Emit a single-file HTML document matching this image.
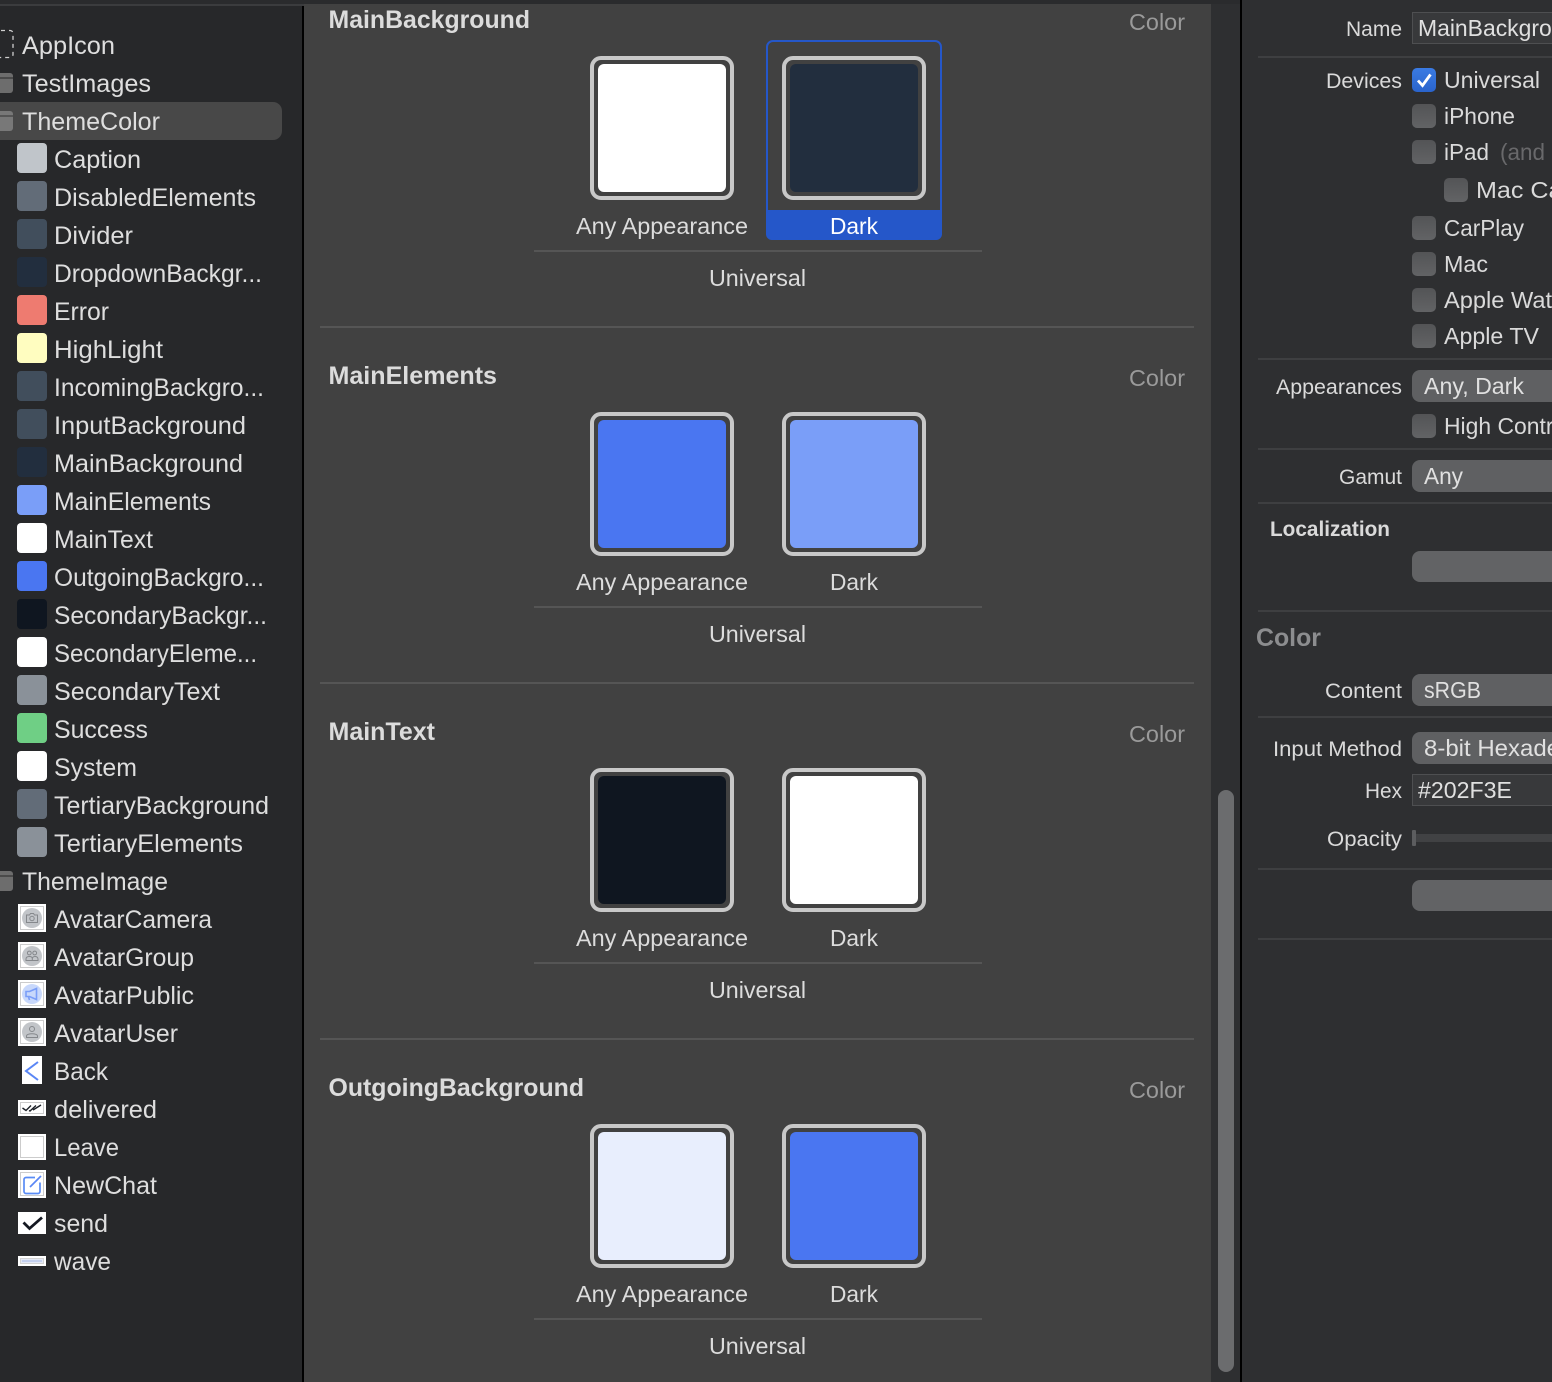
<!DOCTYPE html>
<html><head><meta charset="utf-8"><title>Assets</title>
<style>
html,body{margin:0;padding:0;background:#2e2f31;width:1552px;height:1382px;overflow:hidden}
svg{display:block;font-family:"Liberation Sans",sans-serif}
.s{font-size:25px;fill:#dedede}
.l{font-size:21px;fill:#dadada}
.c{font-size:23px;fill:#dadada}
.h{font-size:25px;font-weight:bold;fill:#dcdcdc}
.g{font-size:23px;fill:#9a9a9a}
.d{font-size:23px;fill:#dcdcdc}
.p{font-size:23px;fill:#e0e0e0}
.sw{fill:none;stroke:#c8c8c8;stroke-width:4}
.sep{fill:#555}
.rs{fill:#3e3f41}
</style></head><body>
<svg width="1552" height="1382" viewBox="0 0 1552 1382" xmlns="http://www.w3.org/2000/svg">
<defs>
<linearGradient id="cb" x1="0" y1="0" x2="0" y2="1"><stop offset="0" stop-color="#535456"/><stop offset="1" stop-color="#626365"/></linearGradient>
<linearGradient id="bl" x1="0" y1="0" x2="0" y2="1"><stop offset="0" stop-color="#3a7be4"/><stop offset="1" stop-color="#2a64cc"/></linearGradient>
</defs>
<!-- backgrounds -->
<rect width="1552" height="1382" fill="#2e2f31"/>
<rect x="0" y="0" width="304" height="1382" fill="#27282a"/>
<rect x="0" y="0" width="1240" height="4" fill="#2a2b2d"/>
<rect x="0" y="4" width="304" height="2" fill="#3b3c3e"/>
<rect x="302" y="6" width="2" height="1376" fill="#000"/>
<rect x="304" y="4" width="907" height="1378" fill="#414141"/>
<rect x="1211" y="4" width="29" height="1378" fill="#2e2f31"/>
<rect x="1218" y="790" width="16" height="582" rx="8" fill="#6b6c6e"/>
<rect x="1240" y="0" width="2" height="1382" fill="#000"/>

<!-- sidebar selection -->
<rect x="-10" y="102" width="292" height="38" rx="9" fill="#484848"/>

<!-- sidebar top-level icons -->
<rect x="-10" y="30.500" width="23" height="27" rx="3" fill="none" stroke="#cfcfcf" stroke-width="1.300" stroke-dasharray="4 4"/>
<rect x="-8" y="73" width="21" height="20" rx="3" fill="#6d6d6d"/><rect x="-8" y="77" width="21" height="2" fill="#4a4a4a"/>
<rect x="-8" y="111" width="21" height="20" rx="3" fill="#787878"/><rect x="-8" y="115" width="21" height="2" fill="#555"/>
<rect x="-8" y="871" width="21" height="20" rx="3" fill="#6d6d6d"/><rect x="-8" y="875" width="21" height="2" fill="#4a4a4a"/>

<!-- colour swatches -->
<rect x="17" y="143" width="30" height="30" rx="4" fill="#c0c5ca"/>
<rect x="17" y="181" width="30" height="30" rx="4" fill="#626c78"/>
<rect x="17" y="219" width="30" height="30" rx="4" fill="#414e5c"/>
<rect x="17" y="257" width="30" height="30" rx="4" fill="#222e3e"/>
<rect x="17" y="295" width="30" height="30" rx="4" fill="#ee7b70"/>
<rect x="17" y="333" width="30" height="30" rx="4" fill="#fffdc0"/>
<rect x="17" y="371" width="30" height="30" rx="4" fill="#414e5c"/>
<rect x="17" y="409" width="30" height="30" rx="4" fill="#414e5c"/>
<rect x="17" y="447" width="30" height="30" rx="4" fill="#222e3e"/>
<rect x="17" y="485" width="30" height="30" rx="4" fill="#7a9ef8"/>
<rect x="17" y="523" width="30" height="30" rx="4" fill="#ffffff"/>
<rect x="17" y="561" width="30" height="30" rx="4" fill="#4a76f1"/>
<rect x="17" y="599" width="30" height="30" rx="4" fill="#0f1620"/>
<rect x="17" y="637" width="30" height="30" rx="4" fill="#ffffff"/>
<rect x="17" y="675" width="30" height="30" rx="4" fill="#8a9199"/>
<rect x="17" y="713" width="30" height="30" rx="4" fill="#6fcf85"/>
<rect x="17" y="751" width="30" height="30" rx="4" fill="#ffffff"/>
<rect x="17" y="789" width="30" height="30" rx="4" fill="#626c78"/>
<rect x="17" y="827" width="30" height="30" rx="4" fill="#8a9199"/>

<!-- image thumbnails -->
<g>
<rect x="18" y="904" width="28" height="28" fill="#fff"/><rect x="20.500" y="906.500" width="23" height="23" fill="none" stroke="#ccc"/>
<circle cx="32" cy="918" r="10" fill="#c2c5c9"/><path d="M26.500 915h3l1-1.500h3l1 1.500h3v7.500h-11z" fill="none" stroke="#85888c"/><circle cx="32" cy="918.500" r="2.200" fill="none" stroke="#85888c"/>
<rect x="18" y="942" width="28" height="28" fill="#fff"/><rect x="20.500" y="944.500" width="23" height="23" fill="none" stroke="#ccc"/>
<circle cx="32" cy="956" r="10" fill="#c2c5c9"/><circle cx="29.300" cy="953" r="1.900" fill="none" stroke="#85888c"/><circle cx="34.700" cy="953" r="1.900" fill="none" stroke="#85888c"/><path d="M26 960.500v-1.500q0-2.500 3.300-2.500t3 2.500v1.500zM32.300 960.500M32.300 959q0-2.500 2.700-2.500t3 2.500v1.500h-5.700" fill="none" stroke="#85888c"/>
<rect x="18" y="980" width="28" height="28" fill="#fff"/><rect x="20.500" y="982.500" width="23" height="23" fill="none" stroke="#ccc"/>
<circle cx="32" cy="994" r="10" fill="#c8d8fb"/><path d="M26 991.500h3.500l7-3v11l-7-3H26z" fill="none" stroke="#7a9ef8" stroke-width="1.600"/><path d="M28.500 997l1 3" stroke="#7a9ef8" stroke-width="1.600"/>
<rect x="18" y="1018" width="28" height="28" fill="#fff"/><rect x="20.500" y="1020.500" width="23" height="23" fill="none" stroke="#ccc"/>
<circle cx="32" cy="1032" r="10" fill="#c2c5c9"/><circle cx="32" cy="1029" r="2.500" fill="none" stroke="#85888c"/><path d="M26.500 1037.500v-1.500c0-3 11-3 11 0v1.500z" fill="none" stroke="#85888c"/>
<rect x="22" y="1056" width="20" height="28" fill="#fff"/><path d="M38 1062L26 1071L38 1080" fill="none" stroke="#5a86f5" stroke-width="2"/>
<rect x="18" y="1100" width="28" height="16" fill="#fff"/><rect x="20.500" y="1102.500" width="23" height="11" fill="none" stroke="#ccc"/><path d="M22.500 1108l3.500 2.500 5-5M29 1110.500l1 .5 6-5.500M33 1110l8-5" fill="none" stroke="#1b1f26" stroke-width="1.400"/>
<rect x="18" y="1134" width="28" height="26" fill="#fff"/><rect x="20.500" y="1136.500" width="23" height="21" fill="none" stroke="#ccc"/>
<rect x="18" y="1170" width="28" height="28" fill="#fff"/><rect x="20.500" y="1172.500" width="23" height="23" fill="none" stroke="#ccc"/><path d="M35 1177.500H26a2 2 0 0 0-2 2v12a2 2 0 0 0 2 2h12a2 2 0 0 0 2-2v-9" fill="none" stroke="#5a8cf5" stroke-width="1.700"/><path d="M30 1187l11-11" stroke="#5a86f5" stroke-width="1.700"/>
<rect x="18" y="1212" width="28" height="22" fill="#fff"/><path d="M23.500 1222.500l6 6 12.500-11" fill="none" stroke="#141821" stroke-width="2.800"/>
<rect x="18" y="1256" width="28" height="10" fill="#fff"/><rect x="20.500" y="1258.500" width="23" height="5" fill="#e4e9f6" stroke="#d4d4d4"/><rect x="22" y="1260" width="20" height="2" fill="#c4d0ee"/>
</g>

<!-- sidebar labels -->
<text class="s" x="22" y="54" textLength="93" lengthAdjust="spacingAndGlyphs">AppIcon</text>
<text class="s" x="22" y="92" textLength="129" lengthAdjust="spacingAndGlyphs">TestImages</text>
<text class="s" x="22" y="130" textLength="138" lengthAdjust="spacingAndGlyphs">ThemeColor</text>
<text class="s" x="54" y="168" textLength="87" lengthAdjust="spacingAndGlyphs">Caption</text>
<text class="s" x="54" y="206" textLength="202" lengthAdjust="spacingAndGlyphs">DisabledElements</text>
<text class="s" x="54" y="244" textLength="79" lengthAdjust="spacingAndGlyphs">Divider</text>
<text class="s" x="54" y="282" textLength="208" lengthAdjust="spacingAndGlyphs">DropdownBackgr...</text>
<text class="s" x="54" y="320" textLength="55" lengthAdjust="spacingAndGlyphs">Error</text>
<text class="s" x="54" y="358" textLength="109" lengthAdjust="spacingAndGlyphs">HighLight</text>
<text class="s" x="54" y="396" textLength="210" lengthAdjust="spacingAndGlyphs">IncomingBackgro...</text>
<text class="s" x="54" y="434" textLength="192" lengthAdjust="spacingAndGlyphs">InputBackground</text>
<text class="s" x="54" y="472" textLength="189" lengthAdjust="spacingAndGlyphs">MainBackground</text>
<text class="s" x="54" y="510" textLength="157" lengthAdjust="spacingAndGlyphs">MainElements</text>
<text class="s" x="54" y="548" textLength="99" lengthAdjust="spacingAndGlyphs">MainText</text>
<text class="s" x="54" y="586" textLength="210" lengthAdjust="spacingAndGlyphs">OutgoingBackgro...</text>
<text class="s" x="54" y="624" textLength="213" lengthAdjust="spacingAndGlyphs">SecondaryBackgr...</text>
<text class="s" x="54" y="662" textLength="203" lengthAdjust="spacingAndGlyphs">SecondaryEleme...</text>
<text class="s" x="54" y="700" textLength="166" lengthAdjust="spacingAndGlyphs">SecondaryText</text>
<text class="s" x="54" y="738" textLength="94" lengthAdjust="spacingAndGlyphs">Success</text>
<text class="s" x="54" y="776" textLength="83" lengthAdjust="spacingAndGlyphs">System</text>
<text class="s" x="54" y="814" textLength="215" lengthAdjust="spacingAndGlyphs">TertiaryBackground</text>
<text class="s" x="54" y="852" textLength="189" lengthAdjust="spacingAndGlyphs">TertiaryElements</text>
<text class="s" x="22" y="890" textLength="146" lengthAdjust="spacingAndGlyphs">ThemeImage</text>
<text class="s" x="54" y="928" textLength="158" lengthAdjust="spacingAndGlyphs">AvatarCamera</text>
<text class="s" x="54" y="966" textLength="140" lengthAdjust="spacingAndGlyphs">AvatarGroup</text>
<text class="s" x="54" y="1004" textLength="140" lengthAdjust="spacingAndGlyphs">AvatarPublic</text>
<text class="s" x="54" y="1042" textLength="124" lengthAdjust="spacingAndGlyphs">AvatarUser</text>
<text class="s" x="54" y="1080" textLength="54" lengthAdjust="spacingAndGlyphs">Back</text>
<text class="s" x="54" y="1118" textLength="103" lengthAdjust="spacingAndGlyphs">delivered</text>
<text class="s" x="54" y="1156" textLength="65" lengthAdjust="spacingAndGlyphs">Leave</text>
<text class="s" x="54" y="1194" textLength="103" lengthAdjust="spacingAndGlyphs">NewChat</text>
<text class="s" x="54" y="1232" textLength="54" lengthAdjust="spacingAndGlyphs">send</text>
<text class="s" x="54" y="1270" textLength="57" lengthAdjust="spacingAndGlyphs">wave</text>

<!-- section 1 -->
<text class="h" x="328.500" y="28" textLength="201.500" lengthAdjust="spacingAndGlyphs">MainBackground</text>
<text class="g" x="1129" y="30" textLength="56" lengthAdjust="spacingAndGlyphs">Color</text>
<rect x="767" y="41" width="174" height="198" rx="6" fill="none" stroke="#2557c9" stroke-width="2"/>
<path d="M766 210h176v24a6 6 0 0 1-6 6H772a6 6 0 0 1-6-6z" fill="#2557c9"/>
<rect class="sw" x="592" y="58" width="140" height="140" rx="9"/>
<rect x="598" y="64" width="128" height="128" rx="6" fill="#ffffff"/>
<rect class="sw" x="784" y="58" width="140" height="140" rx="9"/>
<rect x="790" y="64" width="128" height="128" rx="6" fill="#222e3e"/>
<text class="d" x="576" y="234" textLength="172" lengthAdjust="spacingAndGlyphs">Any Appearance</text>
<text class="d" x="830" y="234" textLength="48" lengthAdjust="spacingAndGlyphs" style="fill:#fff">Dark</text>
<rect class="sep" x="534" y="250" width="448" height="2"/>
<text class="d" x="709" y="286" textLength="97" lengthAdjust="spacingAndGlyphs">Universal</text>
<rect class="sep" x="320" y="326" width="874" height="2"/>

<!-- section 2 -->
<text class="h" x="328.500" y="384" textLength="168.500" lengthAdjust="spacingAndGlyphs">MainElements</text>
<text class="g" x="1129" y="386" textLength="56" lengthAdjust="spacingAndGlyphs">Color</text>
<rect class="sw" x="592" y="414" width="140" height="140" rx="9"/>
<rect x="598" y="420" width="128" height="128" rx="6" fill="#4a76f1"/>
<rect class="sw" x="784" y="414" width="140" height="140" rx="9"/>
<rect x="790" y="420" width="128" height="128" rx="6" fill="#7a9ef8"/>
<text class="d" x="576" y="590" textLength="172" lengthAdjust="spacingAndGlyphs">Any Appearance</text>
<text class="d" x="830" y="590" textLength="48" lengthAdjust="spacingAndGlyphs">Dark</text>
<rect class="sep" x="534" y="606" width="448" height="2"/>
<text class="d" x="709" y="642" textLength="97" lengthAdjust="spacingAndGlyphs">Universal</text>
<rect class="sep" x="320" y="682" width="874" height="2"/>

<!-- section 3 -->
<text class="h" x="328.500" y="740" textLength="106.500" lengthAdjust="spacingAndGlyphs">MainText</text>
<text class="g" x="1129" y="742" textLength="56" lengthAdjust="spacingAndGlyphs">Color</text>
<rect class="sw" x="592" y="770" width="140" height="140" rx="9"/>
<rect x="598" y="776" width="128" height="128" rx="6" fill="#0f1620"/>
<rect class="sw" x="784" y="770" width="140" height="140" rx="9"/>
<rect x="790" y="776" width="128" height="128" rx="6" fill="#ffffff"/>
<text class="d" x="576" y="946" textLength="172" lengthAdjust="spacingAndGlyphs">Any Appearance</text>
<text class="d" x="830" y="946" textLength="48" lengthAdjust="spacingAndGlyphs">Dark</text>
<rect class="sep" x="534" y="962" width="448" height="2"/>
<text class="d" x="709" y="998" textLength="97" lengthAdjust="spacingAndGlyphs">Universal</text>
<rect class="sep" x="320" y="1038" width="874" height="2"/>

<!-- section 4 -->
<text class="h" x="328.500" y="1096" textLength="255.500" lengthAdjust="spacingAndGlyphs">OutgoingBackground</text>
<text class="g" x="1129" y="1098" textLength="56" lengthAdjust="spacingAndGlyphs">Color</text>
<rect class="sw" x="592" y="1126" width="140" height="140" rx="9"/>
<rect x="598" y="1132" width="128" height="128" rx="6" fill="#e8eefd"/>
<rect class="sw" x="784" y="1126" width="140" height="140" rx="9"/>
<rect x="790" y="1132" width="128" height="128" rx="6" fill="#4a76f1"/>
<text class="d" x="576" y="1302" textLength="172" lengthAdjust="spacingAndGlyphs">Any Appearance</text>
<text class="d" x="830" y="1302" textLength="48" lengthAdjust="spacingAndGlyphs">Dark</text>
<rect class="sep" x="534" y="1318" width="448" height="2"/>
<text class="d" x="709" y="1354" textLength="97" lengthAdjust="spacingAndGlyphs">Universal</text>

<!-- inspector separators -->
<rect class="rs" x="1258" y="56" width="294" height="2"/>
<rect class="rs" x="1258" y="358" width="294" height="2"/>
<rect class="rs" x="1258" y="448" width="294" height="2"/>
<rect class="rs" x="1258" y="502" width="294" height="2"/>
<rect class="rs" x="1258" y="610" width="294" height="2"/>
<rect class="rs" x="1258" y="716" width="294" height="2"/>
<rect class="rs" x="1258" y="868" width="294" height="2"/>
<rect class="rs" x="1258" y="938" width="294" height="2"/>

<!-- inspector labels -->
<text class="l" x="1346" y="36" textLength="56" lengthAdjust="spacingAndGlyphs">Name</text>
<text class="l" x="1326" y="88" textLength="76" lengthAdjust="spacingAndGlyphs">Devices</text>
<text class="l" x="1276" y="394" textLength="126" lengthAdjust="spacingAndGlyphs">Appearances</text>
<text class="l" x="1339" y="484" textLength="63" lengthAdjust="spacingAndGlyphs">Gamut</text>
<text class="l" x="1270" y="536" textLength="120" lengthAdjust="spacingAndGlyphs" style="font-weight:bold">Localization</text>
<text x="1256" y="646" font-size="25" font-weight="bold" fill="#8c8d8f" textLength="65" lengthAdjust="spacingAndGlyphs">Color</text>
<text class="l" x="1325" y="698" textLength="77" lengthAdjust="spacingAndGlyphs">Content</text>
<text class="l" x="1273" y="756" textLength="129" lengthAdjust="spacingAndGlyphs">Input Method</text>
<text class="l" x="1365" y="798" textLength="37" lengthAdjust="spacingAndGlyphs">Hex</text>
<text class="l" x="1327" y="846" textLength="75" lengthAdjust="spacingAndGlyphs">Opacity</text>

<!-- name field -->
<rect x="1412.500" y="12.500" width="160" height="31" fill="#38393b" stroke="#4e4f51"/>
<text class="p" x="1418" y="36" textLength="172" lengthAdjust="spacingAndGlyphs">MainBackground</text>

<!-- checkboxes -->
<rect x="1412" y="68" width="24" height="24" rx="5" fill="url(#bl)"/>
<path d="M1418 80.500l4.500 5 8-11" fill="none" stroke="#fff" stroke-width="2.800"/>
<rect x="1412" y="104" width="24" height="24" rx="5" fill="url(#cb)"/>
<rect x="1412" y="140" width="24" height="24" rx="5" fill="url(#cb)"/>
<rect x="1444" y="178" width="24" height="24" rx="5" fill="url(#cb)"/>
<rect x="1412" y="216" width="24" height="24" rx="5" fill="url(#cb)"/>
<rect x="1412" y="252" width="24" height="24" rx="5" fill="url(#cb)"/>
<rect x="1412" y="288" width="24" height="24" rx="5" fill="url(#cb)"/>
<rect x="1412" y="324" width="24" height="24" rx="5" fill="url(#cb)"/>
<rect x="1412" y="414" width="24" height="24" rx="5" fill="url(#cb)"/>

<text class="c" x="1444" y="88" textLength="96" lengthAdjust="spacingAndGlyphs">Universal</text>
<text class="c" x="1444" y="124" textLength="71" lengthAdjust="spacingAndGlyphs">iPhone</text>
<text class="c" x="1444" y="160" textLength="45" lengthAdjust="spacingAndGlyphs">iPad</text>
<text class="c" x="1500" y="160" style="fill:#69696b" textLength="45" lengthAdjust="spacingAndGlyphs">(and</text>
<text class="c" x="1476" y="198" textLength="145" lengthAdjust="spacingAndGlyphs">Mac Catalyst</text>
<text class="c" x="1444" y="236" textLength="80" lengthAdjust="spacingAndGlyphs">CarPlay</text>
<text class="c" x="1444" y="272" textLength="44" lengthAdjust="spacingAndGlyphs">Mac</text>
<text class="c" x="1444" y="308" textLength="133" lengthAdjust="spacingAndGlyphs">Apple Watch</text>
<text class="c" x="1444" y="344" textLength="95" lengthAdjust="spacingAndGlyphs">Apple TV</text>
<text class="c" x="1444" y="434" textLength="140" lengthAdjust="spacingAndGlyphs">High Contrast</text>

<!-- popups -->
<rect x="1412" y="370" width="180" height="32" rx="8" fill="#5f6062"/>
<text class="p" x="1424" y="394" textLength="100" lengthAdjust="spacingAndGlyphs">Any, Dark</text>
<rect x="1412" y="460" width="180" height="32" rx="8" fill="#5f6062"/>
<text class="p" x="1424" y="484" textLength="39" lengthAdjust="spacingAndGlyphs">Any</text>
<rect x="1412" y="551" width="180" height="31" rx="8" fill="#626365"/>
<rect x="1412" y="674" width="180" height="32" rx="8" fill="#5f6062"/>
<text class="p" x="1424" y="698" textLength="57" lengthAdjust="spacingAndGlyphs">sRGB</text>
<rect x="1412" y="732" width="180" height="32" rx="8" fill="#5f6062"/>
<text class="p" x="1424" y="756" textLength="192" lengthAdjust="spacingAndGlyphs">8-bit Hexadecimal</text>
<rect x="1412.500" y="774.500" width="160" height="31" fill="#38393b" stroke="#4e4f51"/>
<text class="p" x="1418" y="798" textLength="94" lengthAdjust="spacingAndGlyphs">#202F3E</text>
<rect x="1412" y="834" width="140" height="8" fill="#414244"/>
<rect x="1412" y="830" width="4" height="16" rx="1" fill="#5c5d5f"/>
<rect x="1412" y="880" width="180" height="31" rx="8" fill="#626365"/>
</svg>
</body></html>
